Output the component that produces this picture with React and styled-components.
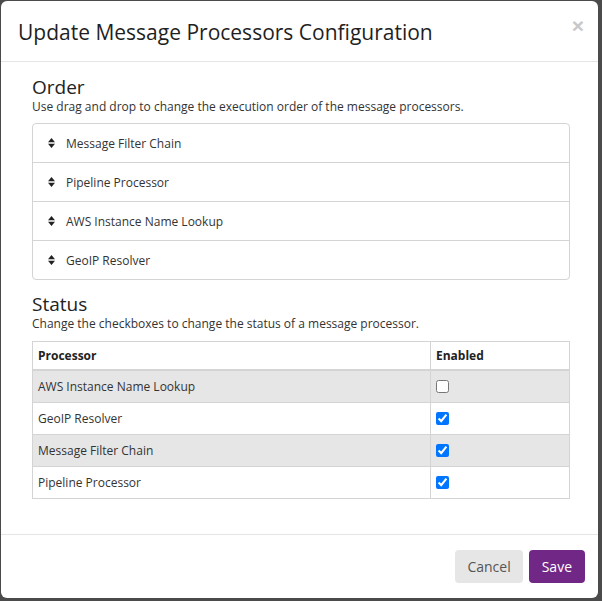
import React from "react";
import styled, { createGlobalStyle } from "styled-components";

const GlobalStyle = createGlobalStyle`
  html, body { margin: 0; padding: 0; }
  body {
    background: #4b4b4b;
    font-family: "Open Sans", "Liberation Sans", sans-serif;
    color: #333;
    width: 602px;
    height: 601px;
    overflow: hidden;
  }
`;

const Backdrop = styled.div`
  padding: 1px 0 0 1px;
`;

const Modal = styled.div`
  width: 597px;
  height: 597px;
  background: #fff;
  border-radius: 6px;
  box-sizing: border-box;
  display: flex;
  flex-direction: column;
`;

const Header = styled.div`
  display: flex;
  align-items: flex-start;
  justify-content: space-between;
  padding: 16px 14px 0 17px;
  height: 61px;
  box-sizing: border-box;
  border-bottom: 1px solid #e5e5e5;
`;

const Title = styled.h4`
  margin: 0;
  font-size: 21px;
  font-weight: 400;
  line-height: 30px;
  color: #1f1f1f;
`;

const Close = styled.span`
  font-family: "Liberation Sans", sans-serif;
  font-size: 21px;
  font-weight: 700;
  line-height: 18px;
  color: #c8c8c8;
`;

const Body = styled.div`
  flex: 1;
  padding: 14px 28px 0 31px;
  border-bottom: 1px solid #e5e5e5;
`;

const SectionTitle = styled.h2`
  margin: 0;
  font-size: 19px;
  font-weight: 400;
  line-height: 22px;
  color: #222;
`;

const Help = styled.p`
  margin: 0 0 ${(p) => p.$gap || "8px"};
  font-size: 12px;
  line-height: 17px;
  color: #333;
`;

const List = styled.div`
  border: 1px solid #d4d4d4;
  border-radius: 4px;
  margin-bottom: 13px;
`;

const ListItem = styled.div`
  display: flex;
  align-items: center;
  gap: 11px;
  height: 38px;
  padding: 0 0 0 15px;
  font-size: 12px;
  color: #333;
  border-top: ${(p) => (p.$first ? "none" : "1px solid #d4d4d4")};
`;

const SortIcon = () => (
  <svg width="7" height="10" viewBox="0 0 7 10">
    <path d="M3.5 0 L7 4.2 H0 Z M3.5 10 L7 5.8 H0 Z" fill="#222" />
  </svg>
);

const Table = styled.table`
  width: 100%;
  border-collapse: collapse;
  border: 1px solid #d4d4d4;
  font-size: 12px;
`;

const Th = styled.th`
  text-align: left;
  font-weight: 700;
  height: 27px;
  padding: 0 5px;
  border: 1px solid #d4d4d4;
  border-bottom: 2px solid #d4d4d4;
  color: #222;
  width: ${(p) => p.$w || "auto"};
`;

const Row = styled.tr`
  background: ${(p) => (p.$striped ? "#e6e6e6" : "#fff")};
`;

const Td = styled.td`
  height: 31px;
  padding: 0 5px;
  border: 1px solid #d4d4d4;
  vertical-align: middle;
  color: #333;
`;

const Check = styled.input`
  display: block;
  margin: 0;
  width: 13px;
  height: 13px;
  accent-color: #0075ff;
`;

const Footer = styled.div`
  display: flex;
  justify-content: flex-end;
  gap: 6px;
  padding: 15px 13px 15px 0;
`;

const Button = styled.button`
  font-family: "Open Sans", "Liberation Sans", sans-serif;
  font-size: 14px;
  height: 33px;
  padding: 0 ${(p) => (p.$primary ? "13px" : "12px")};
  border: none;
  border-radius: 4px;
  background: ${(p) => (p.$primary ? "#702785" : "#e6e6e6")};
  color: ${(p) => (p.$primary ? "#fff" : "#555")};
`;

const order = [
  "Message Filter Chain",
  "Pipeline Processor",
  "AWS Instance Name Lookup",
  "GeoIP Resolver",
];

const status = [
  { name: "AWS Instance Name Lookup", enabled: false },
  { name: "GeoIP Resolver", enabled: true },
  { name: "Message Filter Chain", enabled: true },
  { name: "Pipeline Processor", enabled: true },
];

export default function App() {
  return (
    <>
      <GlobalStyle />
      <Backdrop>
        <Modal>
          <Header>
            <Title>Update Message Processors Configuration</Title>
            <Close>×</Close>
          </Header>
          <Body>
            <SectionTitle>Order</SectionTitle>
            <Help>Use drag and drop to change the execution order of the message processors.</Help>
            <List>
              {order.map((name, i) => (
                <ListItem key={name} $first={i === 0}>
                  <SortIcon />
                  {name}
                </ListItem>
              ))}
            </List>
            <SectionTitle>Status</SectionTitle>
            <Help $gap="9px">Change the checkboxes to change the status of a message processor.</Help>
            <Table>
              <thead>
                <tr>
                  <Th>Processor</Th>
                  <Th $w="128px">Enabled</Th>
                </tr>
              </thead>
              <tbody>
                {status.map((s, i) => (
                  <Row key={s.name} $striped={i % 2 === 0}>
                    <Td>{s.name}</Td>
                    <Td>
                      <Check type="checkbox" defaultChecked={s.enabled} />
                    </Td>
                  </Row>
                ))}
              </tbody>
            </Table>
          </Body>
          <Footer>
            <Button>Cancel</Button>
            <Button $primary>Save</Button>
          </Footer>
        </Modal>
      </Backdrop>
    </>
  );
}
